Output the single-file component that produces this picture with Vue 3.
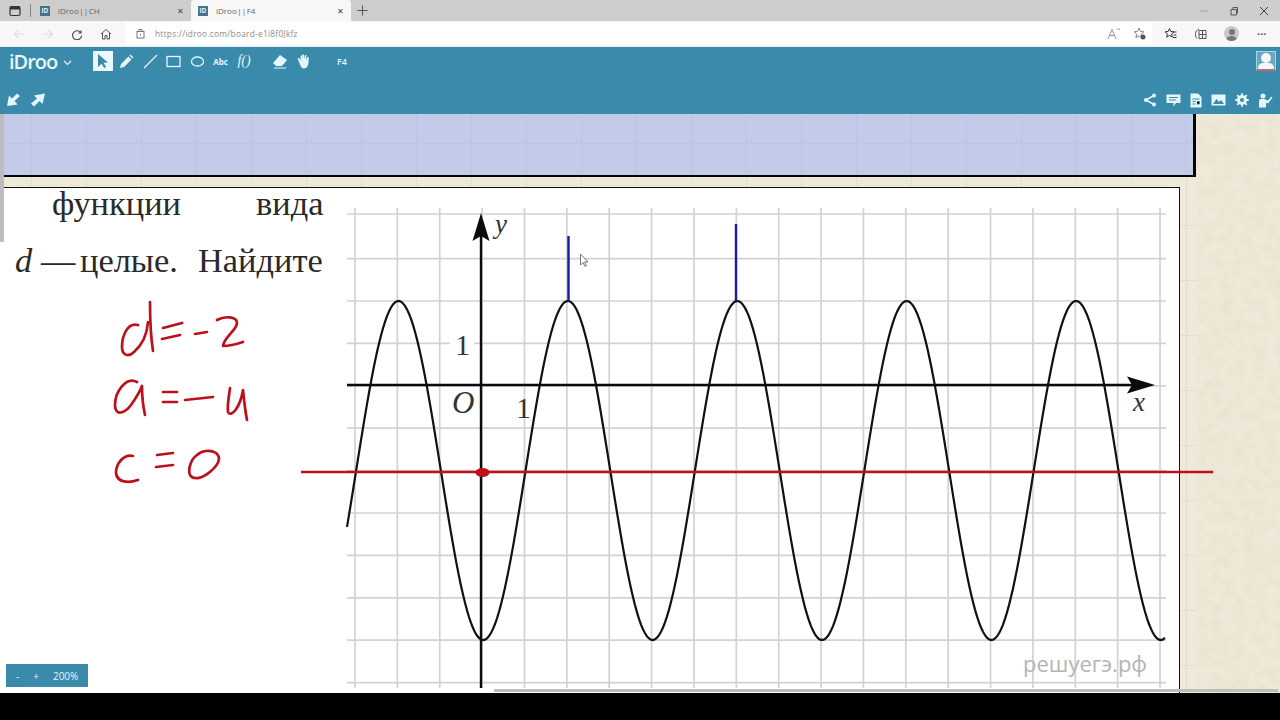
<script setup>
const vLines = Array.from({ length: 20 }, (_, i) => 355 + i * 42.37)
const hLines = [214, ...Array.from({ length: 11 }, (_, i) => 258.6 + i * 42.4)].map((y) => Math.round(y * 10) / 10)
let wave = ''
for (let x = 347; x <= 1166; x += 2) {
  const y = 470.5 - 169.5 * Math.cos(((x - 398.5) * 2 * Math.PI) / 169.4)
  wave += (wave ? ' L' : 'M') + x + ' ' + y.toFixed(1)
}
</script>

<template>
  <div class="page">
    <div class="tabstrip">
      <svg class="win-icon" width="12" height="12" viewBox="0 0 12 12"><rect x="1" y="1.500" width="10" height="9" rx="1.500" fill="none" stroke="#333" stroke-width="1.200"/><rect x="1" y="1.500" width="10" height="3" fill="#333"/></svg>
      <span class="tab-div"></span>
      <div class="tab">
        <span class="fav">iD</span><span class="tab-title">iDroo || CH</span><span class="tab-x">✕</span>
      </div>
      <div class="tab active">
        <span class="fav">iD</span><span class="tab-title">iDroo || F4</span><span class="tab-x">✕</span>
      </div>
      <svg class="plus" width="11" height="11" viewBox="0 0 11 11"><path d="M5.500 .5v10M.5 5.500h10" stroke="#555" stroke-width="1"/></svg>
      <div class="winctl">
        <svg width="10" height="10" viewBox="0 0 10 10"><path d="M1 5h8" stroke="#aaa" stroke-width="1.200"/></svg>
        <svg width="10" height="10" viewBox="0 0 10 10"><path d="M2 3.500h5.500v5.500H2zM4 3.500V1.500h4.500V7H7.500" fill="none" stroke="#555"/></svg>
        <svg width="10" height="10" viewBox="0 0 10 10"><path d="M1 1l8 8M9 1l-8 8" stroke="#444" stroke-width="1"/></svg>
      </div>
    </div>

    <div class="urlbar">
      <div class="nav">
        <svg width="12" height="12" viewBox="0 0 12 12"><path d="M11 6H1.500M5.500 2L1.500 6l4 4" fill="none" stroke="#ddd" stroke-width="1.100"/></svg>
        <svg width="12" height="12" viewBox="0 0 12 12"><path d="M1 6h9.500M6.500 2l4 4-4 4" fill="none" stroke="#ddd" stroke-width="1.100"/></svg>
        <svg width="12" height="12" viewBox="0 0 12 12"><path d="M10 2.500V5H7.500M10 5a4.500 4.500 0 1 0 .6 2.500" fill="none" stroke="#444" stroke-width="1.100"/></svg>
        <svg width="12" height="12" viewBox="0 0 12 12"><path d="M1 6l5-4.500L11 6M2.500 5v6h2.500V7.500h2V11h2.500V5" fill="none" stroke="#555" stroke-width="1"/></svg>
      </div>
      <div class="address">
        <svg width="9" height="11" viewBox="0 0 9 11"><rect x="1" y="3.500" width="7" height="6.500" fill="none" stroke="#777"/><path d="M3 3.500V1.500h3v2" fill="none" stroke="#777"/><rect x="4" y="6" width="1" height="1.500" fill="#777"/></svg>
        <span class="url">https://idroo.com/board-e1i8f0Jkfz</span>
        <svg class="read" width="14" height="12" viewBox="0 0 14 12"><path d="M1 11L5 1.500 9 11M2.500 7.500h5M10 2l1.500-1.500L13 2" fill="none" stroke="#888" stroke-width=".9"/></svg>
        <svg class="addr-star" width="13" height="13" viewBox="0 0 13 13"><path d="M6 1l1.500 3.500 3.500.3-2.700 2.300.8 3.600L6 8.800l-3.100 1.900.8-3.600L1 4.800l3.500-.3z" fill="none" stroke="#777" stroke-width=".9"/><circle cx="10" cy="10" r="2.500" fill="#555"/></svg>
      </div>
      <div class="browser-tools">
        <svg width="13" height="13" viewBox="0 0 13 13"><path d="M5.500 1.500l1.300 3 3.200.3-2.400 2.100.7 3.200-2.800-1.700-2.800 1.700.7-3.200L1 4.800l3.200-.3z" fill="none" stroke="#333"/><path d="M9 5h3.500M9.500 8h3M9 10.500h3.500" stroke="#333"/></svg>
        <svg width="13" height="13" viewBox="0 0 13 13"><path d="M3 11.500C.500 9 1 3.500 5 2M5 3.500h7v8H5zM8.500 3.500v8M5 7.500h7" fill="none" stroke="#555"/></svg>
        <span class="avatar-small"><i class="av-head"></i><i class="av-body"></i></span>
        <span class="dots">···</span>
      </div>
    </div>

    <header class="appbar">
      <div class="row-one">
        <div class="logo">iDroo<svg width="9" height="6" viewBox="0 0 9 6"><path d="M1 1l3.500 3.500L8 1" fill="none" stroke="#dff3fb" stroke-width="1.200"/></svg></div>
        <div class="tools">
          <span class="tool selected"><svg width="14" height="16" viewBox="0 0 14 16"><path d="M2 1v13l3.500-3.300 2.800 4.300 1.800-1-2.600-4.200 4.500-.3z" fill="#3a8bab"/></svg></span>
          <span class="tool"><svg width="15" height="15" viewBox="0 0 15 15"><path d="M1 14l1-4 7.500-7.500 3 3L5 13zM10.500 1.500l1-1 3 3-1 1z" fill="#e4f6fc"/></svg></span>
          <span class="tool"><svg width="15" height="15" viewBox="0 0 15 15"><path d="M1 14L14 1" stroke="#e4f6fc" stroke-width="1.300"/></svg></span>
          <span class="tool"><svg width="15" height="13" viewBox="0 0 15 13"><rect x="1" y="1.500" width="13" height="10" fill="none" stroke="#e4f6fc" stroke-width="1.300"/></svg></span>
          <span class="tool"><svg width="15" height="13" viewBox="0 0 15 13"><ellipse cx="7.500" cy="6.500" rx="6" ry="4.500" fill="none" stroke="#e4f6fc" stroke-width="1.300"/></svg></span>
          <span class="tool abc">Abc</span>
          <span class="tool fx">f()</span>
          <span class="tool gap-l"><svg width="16" height="15" viewBox="0 0 16 15"><path d="M1 9l7-8 7 5-5 6H4z" fill="#e4f6fc"/><path d="M2 14h12" stroke="#e4f6fc"/></svg></span>
          <span class="tool"><svg width="15" height="15" viewBox="0 0 15 15"><path d="M3 8L1.500 4.500l1.500-.5 1.500 2.500V1.500h1.500V5l.5-4.500h1.500V5l1-4h1.500l-.5 5 1.500-3h1.300L12.500 9c-.5 3-2 5.500-4.500 5.500C5.500 14.500 4.500 12 3 8z" fill="#e4f6fc"/></svg></span>
          <span class="tool board-name">F4</span>
        </div>
        <span class="profile"><i class="pf-head"></i><i class="pf-body"></i></span>
      </div>
      <div class="row-two">
        <div class="arrows">
          <svg width="15" height="14" viewBox="0 0 15 14"><path d="M14 3L11 .5 6 5.500 3 2.500 1 13l10.500-1.500L8.500 8z" fill="#e4f6fc"/></svg>
          <svg width="16" height="14" viewBox="0 0 16 14"><path d="M1 10.500l3 3L9.500 8l3 3L15 .5 4 2.500 7 5.500z" fill="#e4f6fc"/></svg>
        </div>
        <div class="actions">
          <svg width="14" height="14" viewBox="0 0 14 14"><path d="M11 2.500L3 7l8 4.500" fill="none" stroke="#e4f6fc" stroke-width="1.500"/><circle cx="11" cy="2.500" r="2" fill="#e4f6fc"/><circle cx="3" cy="7" r="2" fill="#e4f6fc"/><circle cx="11" cy="11.500" r="2" fill="#e4f6fc"/></svg>
          <svg width="15" height="13" viewBox="0 0 15 13"><path d="M.5 .5h14v8.500H10L7.500 12.500V9h-7z" fill="#e4f6fc"/><path d="M3 3.500h9M3 6h7" stroke="#3a8bab"/></svg>
          <svg width="12" height="15" viewBox="0 0 12 15"><path d="M.5 .5h7.500L11.500 4v10.500H.5z" fill="#e4f6fc"/><path d="M2.500 6h7M2.500 8.500h3M2.500 11h3M7 8.500h2.500V11H7" stroke="#3a8bab"/></svg>
          <svg width="15" height="12" viewBox="0 0 15 12"><path d="M.5 .5h14v11H.5z" fill="#e4f6fc"/><path d="M2 10l3.500-5L8 8l2-2 3 4z" fill="#3a8bab"/></svg>
          <svg width="14" height="14" viewBox="0 0 14 14"><circle cx="7" cy="7" r="3.800" fill="none" stroke="#e4f6fc" stroke-width="2.600"/><path d="M7 .2v13.600M.2 7h13.600M2.200 2.200l9.600 9.600M11.800 2.200l-9.600 9.600" stroke="#e4f6fc" stroke-width="1.800"/><circle cx="7" cy="7" r="2" fill="#3a8bab"/></svg>
          <svg width="15" height="15" viewBox="0 0 15 15"><circle cx="5" cy="3" r="2.500" fill="#e4f6fc"/><path d="M1 14.500V8c0-1.500 1-2 2.500-2h3L10 7.500 13.500 3.500l1 1L10 10.500 8 9.800v4.700z" fill="#e4f6fc"/></svg>
        </div>
      </div>
    </header>

    <main class="board">
      <div class="paper-band"></div>
      <div class="panel"></div>
      <div class="sheet"></div>
      <svg class="drawing" width="1280" height="579" viewBox="0 114 1280 579">
        <defs>
          <filter id="paperNoise" x="0" y="0" width="100%" height="100%">
            <feTurbulence type="fractalNoise" baseFrequency="0.09" numOctaves="3" seed="4"/>
            <feColorMatrix type="matrix" values="0 0 0 0 .72  0 0 0 0 .66  0 0 0 0 .5  0 0 .55 0 -.17"/>
          </filter>
        </defs>
        <rect x="1197" y="114" width="83" height="579" filter="url(#paperNoise)"/>
        <rect x="0" y="114" width="4" height="128" fill="#bcbcc0"/>
        <g stroke="#d2d2d2" stroke-width="1.700">
          <line v-for="x in vLines" :key="'v' + x" :x1="x" :x2="x" y1="208" y2="688"/>
          <line v-for="y in hLines" :key="'h' + y" x1="347" x2="1166" :y1="y" :y2="y"/>
        </g>
        <text class="sans-mark" x="1023" y="672">решуегэ.рф</text>
        <rect x="450" y="334" width="24" height="20" fill="#fff"/>
        <path :d="wave" fill="none" stroke="#111" stroke-width="2.200"/>
        <path d="M347 385H1140M481 688V230" stroke="#0b0b0b" stroke-width="2.400" fill="none"/>
        <path d="M481 213l-8.500 28 8.500-5 8.500 5zM1155 385l-28-8.500 5 8.500-5 8.500z" fill="#0b0b0b"/>
        <text class="serif-it small" x="495" y="233">y</text>
        <text class="serif" x="455" y="355">1</text>
        <text class="serif-it" x="452" y="413">O</text>
        <text class="serif" x="516" y="418">1</text>
        <text class="serif-it small" x="1133" y="411">x</text>
        <path d="M301 472H1213" stroke="#bd0f1c" stroke-width="2.400"/>
        <ellipse cx="482.500" cy="472.500" rx="7" ry="4.500" fill="#bd0f1c"/>
        <path d="M568.500 236V301M736 224V301" stroke="#1a1aa8" stroke-width="2.400"/>
        <path d="M580.500 254v11l2.500-2.500 2 4 1.500-.8-2-3.800h3.500z" fill="#fff" stroke="#555" stroke-width=".8"/>
        <text class="body" x="52" y="215">функции</text>
        <text class="body" x="256" y="215">вида</text>
        <text class="body it" x="15" y="272">d</text>
        <text class="body" x="41" y="272">—</text>
        <text class="body" x="80" y="272">целые.</text>
        <text class="body" x="198" y="272">Найдите</text>
        <g fill="none" stroke="#bd0f1c" stroke-width="2.700" stroke-linecap="round" stroke-linejoin="round">
          <path d="M138 325C128 322 122 335 122 347C122 356 129 357 134 352C142 345 147 335 148 322M150 302C150 320 151 338 153 351"/>
          <path d="M163 328L182 323M162 339L180 335M195 334L207 332"/>
          <path d="M217 320C224 316 237 316 237 323C237 330 224 337 223 346C230 346 237 344 243 342"/>
          <path d="M137 382C126 376 115 392 115 405C115 417 125 413 131 405C136 398 140 391 142 386C142 396 143 406 145 415"/>
          <path d="M163 392L177 392M163 402L177 402M185 400L213 397"/>
          <path d="M230 388C229 396 227 406 228 412C231 418 240 408 243 390C244 400 245 410 247 420"/>
          <path d="M133 456C124 454 116 463 116 473C117 483 129 483 138 480"/>
          <path d="M157 455L173 453M156 467L173 465"/>
          <path d="M197 455C190 460 188 470 190 475C194 481 203 478 211 471C218 465 222 458 216 453C210 449 201 451 197 455Z"/>
        </g>
      </svg>
      <div class="scrollbar"></div>
      <div class="zoom-box"><span>-</span><span>+</span><span>200%</span></div>
    </main>
    <div class="blackbar"></div>
  </div>
</template>

<style scoped>
.page { width: 1280px; height: 720px; display: flex; flex-direction: column; overflow: hidden; font-family: "Open Sans", "Noto Sans", sans-serif; background: #000; }
.tabstrip { height: 21px; background: #cdcdcd; display: flex; align-items: center; padding-left: 9px; flex: none; }
.win-icon { margin-right: 9px; }
.tab-div { width: 1px; height: 13px; background: #888; margin-right: 6px; }
.tab { width: 154px; height: 21px; display: flex; align-items: center; padding-left: 3px; box-sizing: border-box; flex: none; }
.tab.active { background: #f7f7f7; border-radius: 3px 3px 0 0; width: 160px; padding-left: 7px; }
.fav { width: 10px; height: 10px; background: #47708c; color: #e7eef3; font-size: 6.500px; line-height: 10px; text-align: center; font-weight: 700; flex: none; }
.tab-title { font-size: 8px; color: #666; margin-left: 8px; flex: 1; word-spacing: -1.500px; }
.tab-x { font-size: 8px; color: #444; width: 14px; text-align: left; flex: none; }
.plus { margin-left: 6px; }
.winctl { margin-left: auto; display: flex; gap: 20px; padding-right: 11px; }
.urlbar { height: 25px; background: #f7f7f7; display: flex; align-items: center; flex: none; border-bottom: 1px solid #e4eef3; }
.nav { width: 126px; display: flex; gap: 17px; padding-left: 13px; box-sizing: border-box; flex: none; }
.address { width: 1026px; height: 23px; background: #fff; display: flex; align-items: center; padding-left: 10px; box-sizing: border-box; flex: none; }
.url { font-size: 8.300px; color: #8a8a8a; margin-left: 10px; letter-spacing: .27px; flex: 1; }
.read { margin-right: 12px; }
.addr-star { margin-right: 6px; }
.browser-tools { display: flex; align-items: center; gap: 17px; padding-left: 12px; }
.avatar-small { width: 15px; height: 15px; border-radius: 50%; background: #c9c9c9; position: relative; overflow: hidden; display: block; }
.av-head { position: absolute; left: 4.500px; top: 2.500px; width: 6px; height: 6px; border-radius: 50%; background: #777; }
.av-body { position: absolute; left: 2px; top: 9.500px; width: 11px; height: 8px; border-radius: 50%; background: #777; }
.dots { font-size: 11px; color: #555; font-weight: 700; margin-left: 1px; }
.appbar { height: 67px; background: #3a8bab; flex: none; display: flex; flex-direction: column; }
.row-one { height: 28px; display: flex; align-items: center; flex: none; }
.logo { width: 93px; padding-left: 9px; box-sizing: border-box; font-size: 20px; font-weight: 600; color: #e9f8fd; letter-spacing: -1px; display: flex; align-items: center; flex: none; gap: 6px; }
.logo svg { margin-top: 3px; }
.tools { display: flex; gap: 3.500px; align-items: center; }
.tool { width: 20px; height: 20px; display: flex; align-items: center; justify-content: center; color: #e4f6fc; flex: none; }
.tool.selected { background: #e9f8fd; }
.abc { font-size: 8px; font-weight: 700; }
.fx { font-family: "Liberation Serif", serif; font-style: italic; font-size: 14px; }
.gap-l { margin-left: 12.500px; }
.board-name { margin-left: 15px; font-size: 9px; font-weight: 600; }
.profile { margin-left: auto; margin-right: 4px; width: 20px; height: 20px; background: #6aa7c0; border: 1px solid #a5d6e8; border-bottom: 2px solid #c06a72; box-sizing: border-box; position: relative; overflow: hidden; display: block; }
.pf-head { position: absolute; left: 4px; top: 1px; width: 10px; height: 10px; border-radius: 50%; background: #f3f9fb; }
.pf-body { position: absolute; left: 1px; top: 11px; width: 16px; height: 7px; border-radius: 5px 5px 0 0; background: #f3f9fb; }
.row-two { flex: 1; display: flex; align-items: center; justify-content: space-between; padding: 11px 7px 0 6px; }
.arrows { display: flex; gap: 9px; }
.actions { display: flex; align-items: center; gap: 9px; }
.board { flex: 1; position: relative; overflow: hidden; background: #efe9d9; }
.paper-band { position: absolute; left: 0; top: 0; width: 1197px; height: 100%; background-image: repeating-linear-gradient(90deg, transparent 0 27px, #e4decd 27px 27.500px), repeating-linear-gradient(0deg, transparent 0 27px, #e4decd 27px 27.500px); background-position: 4px 0; }
.panel { position: absolute; left: 0; top: 0; width: 1193px; height: 61px; border-right: 3px solid #050505; border-bottom: 2px solid #050505; background-color: #c3cbe9; background-image: repeating-linear-gradient(90deg, transparent 0 27px, #bcc5e4 27px 27.500px), linear-gradient(transparent 29px, #bcc5e4 29px 30px, transparent 30px); background-position: 4px 0, 0 0; }
.sheet { position: absolute; left: 0; top: 73px; width: 1179px; height: 506px; background: #fff; border-top: 1px solid #111; border-right: 1px solid #111; }
.drawing { position: absolute; left: 0; top: 0; }
.serif { font-family: "Liberation Serif", serif; font-size: 30px; fill: #333; }
.serif-it { font-family: "Liberation Serif", serif; font-style: italic; font-size: 31px; fill: #333; }
.serif-it.small { font-size: 27px; }
.body { font-family: "Liberation Serif", serif; font-size: 34.400px; fill: #2a2a2a; }
.it { font-style: italic; }
.sans-mark { font-family: "Open Sans", sans-serif; font-size: 22px; fill: #b4b4b4; }
.scrollbar { position: absolute; left: 494px; right: 2px; top: 575px; height: 3px; background: #bdbdbd; }
.zoom-box { position: absolute; left: 6px; top: 550px; width: 82px; height: 23px; box-sizing: border-box; background: #3a8bab; color: #e4f6fc; font-size: 10px; display: flex; align-items: center; padding-left: 10px; gap: 14px; }
.blackbar { height: 27px; background: #000; flex: none; }
</style>
